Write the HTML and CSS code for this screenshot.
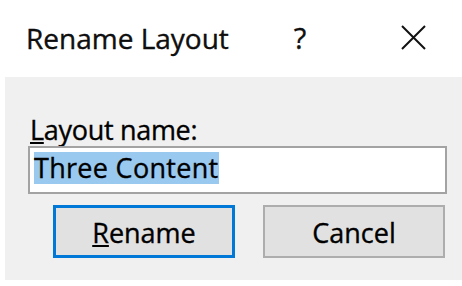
FILE: index.html
```html
<!DOCTYPE html>
<html>
<head>
<meta charset="utf-8">
<link rel="stylesheet" href="styles.css">
</head>
<body>
<div class="dialog">
  <div class="titlebar">
    <span class="title">Rename Layout</span>
    <span class="help">?</span>
    <span class="close">
      <svg width="25" height="25" viewBox="0 0 25 25"><path d="M1 1 L24 24 M24 1 L1 24" stroke="#111" stroke-width="2" fill="none"/></svg>
    </span>
  </div>
  <div class="panel">
    <div class="label"><u>L</u>ayout name:</div>
    <div class="textbox"><span class="sel">Three Content</span></div>
    <div class="buttons">
      <div class="btn default"><span><u>R</u>ename</span></div>
      <div class="btn">Cancel</div>
    </div>
  </div>
</div>
</body>
</html>
```
FILE: styles.css
```css
html, body {
  margin: 0;
  padding: 0;
  background: #ffffff;
}
body {
  font-family: "Open Sans", "Noto Sans", sans-serif;
  font-size: 27px;
  line-height: 32px;
  color: #000;
  width: 462px;
  height: 286px;
  overflow: hidden;
  -webkit-text-stroke: 0.35px #000;
}
.dialog {
  display: flex;
  flex-direction: column;
}
.titlebar {
  height: 77px;
  box-sizing: border-box;
  padding: 22px 26px 0 26px;
  display: flex;
  align-items: flex-start;
}
.title {
  flex: 1;
  font-size: 28px;
  color: #111;
}
.help {
  width: 46px;
  text-align: center;
  font-size: 29px;
  margin-left: -4px;
  color: #111;
}
.close {
  width: 46px;
  margin-left: 67px;
  display: flex;
  justify-content: center;
  padding-top: 3px;
}
.panel {
  margin-left: 5px;
  height: 203px;
  background: #f0f0f0;
  box-sizing: border-box;
  padding: 37px 15px 0 23px;
  display: flex;
  flex-direction: column;
}
.label {
  padding-left: 2px;
  letter-spacing: -0.3px;
}
.textbox {
  width: 419px;
  height: 48px;
  box-sizing: border-box;
  border: 2px solid #a3a3a3;
  background: #fff;
  padding: 4px 4px 0 4px;
}
.sel {
  display: inline-block;
  height: 32px;
  line-height: 32px;
  background: #99c9ef;
  padding-right: 1px;
  letter-spacing: 0.3px;
}
.buttons {
  display: flex;
  gap: 28px;
  margin-top: 11px;
  padding-left: 25px;
}
.btn {
  width: 182px;
  height: 53px;
  box-sizing: border-box;
  background: #e1e1e1;
  border: 2px solid #adadad;
  display: flex;
  align-items: center;
  justify-content: center;
  padding-top: 2px;
}
.btn.default {
  border: 3px solid #0078d7;
}
```
